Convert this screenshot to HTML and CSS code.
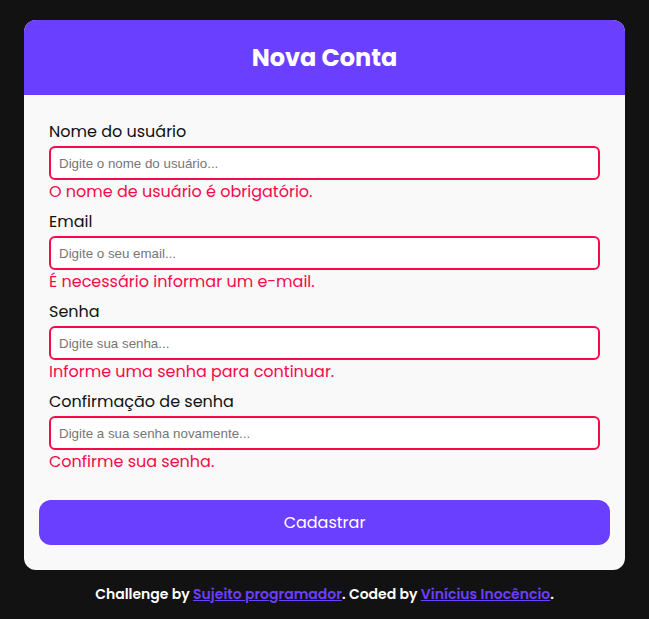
FILE: index.html
```html
<!DOCTYPE html>
<html lang="pt-BR">
<head>
<meta charset="utf-8">
<title>Nova Conta</title>
<link rel="stylesheet" href="styles.css">
</head>
<body>
<main class="card">
  <header class="card-header">
    <h1 class="title">Nova Conta</h1>
  </header>
  <form class="form">
    <div class="field">
      <label class="label">Nome do usuário</label>
      <input class="input" type="text" placeholder="Digite o nome do usuário...">
      <p class="error">O nome de usuário é obrigatório.</p>
    </div>
    <div class="field">
      <label class="label">Email</label>
      <input class="input" type="text" placeholder="Digite o seu email...">
      <p class="error">É necessário informar um e-mail.</p>
    </div>
    <div class="field">
      <label class="label">Senha</label>
      <input class="input" type="password" placeholder="Digite sua senha...">
      <p class="error">Informe uma senha para continuar.</p>
    </div>
    <div class="field">
      <label class="label">Confirmação de senha</label>
      <input class="input" type="password" placeholder="Digite a sua senha novamente...">
      <p class="error">Confirme sua senha.</p>
    </div>
    <button class="button" type="button">Cadastrar</button>
  </form>
</main>
<footer class="footer">
  Challenge by <a href="#">Sujeito programador</a>. Coded by <a href="#">Vinícius Inocêncio</a>.
</footer>
</body>
</html>
```
FILE: styles.css
```css
* { box-sizing: border-box; }
html, body { margin: 0; padding: 0; }
body {
  background: #121212;
  font-family: Poppins, "Open Sans", "Liberation Sans", sans-serif;
  padding-top: 20px;
}
.card {
  width: 601px;
  margin: 0 auto;
  background: #f9f9f9;
  border-radius: 12px;
  overflow: hidden;
}
.card-header {
  background: #6b3fff;
  height: 75px;
  display: flex;
  align-items: center;
  justify-content: center;
}
.title {
  margin: 0;
  color: #fff;
  font-size: 24px;
  font-weight: 700;
}
.form {
  padding: 25px 15px 25px;
  display: flex;
  flex-direction: column;
}
.field {
  display: flex;
  flex-direction: column;
  padding: 0 10px;
  margin-bottom: 6px;
}
.label {
  font-size: 16px;
  line-height: 24px;
  color: #111;
  margin-bottom: 2px;
}
.input {
  height: 34px;
  border: 2px solid #f50a4a;
  border-radius: 6px;
  padding: 0 8px;
  font-family: "Liberation Sans", Arial, sans-serif;
  font-size: 13.33px;
  background: #fff;
  outline: none;
}
.input::placeholder { color: #767676; }
.error {
  margin: 0;
  color: #f50a4a;
  font-size: 16px;
  line-height: 24px;
}
.button {
  margin-top: 20px;
  height: 45px;
  border: none;
  border-radius: 12px;
  background: #6b3fff;
  color: #fff;
  font-family: inherit;
  font-size: 16px;
}
.footer {
  text-align: center;
  color: #fff;
  font-size: 14px;
  font-weight: 600;
  line-height: 20px;
  margin-top: 14px;
}
.footer a {
  color: #6b3fff;
  text-decoration: underline;
}
```
